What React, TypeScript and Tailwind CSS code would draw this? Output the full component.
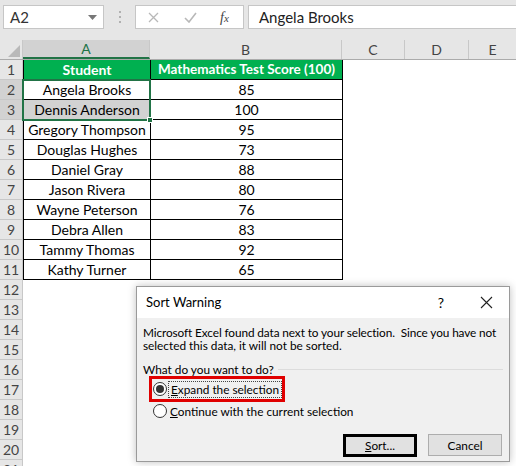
import React from "react";

const students: [string, string][] = [
  ["Angela Brooks", "85"],
  ["Dennis Anderson", "100"],
  ["Gregory Thompson", "95"],
  ["Douglas Hughes", "73"],
  ["Daniel Gray", "88"],
  ["Jason Rivera", "80"],
  ["Wayne Peterson", "76"],
  ["Debra Allen", "83"],
  ["Tammy Thomas", "92"],
  ["Kathy Turner", "65"],
];

const cellFont = { fontFamily: 'Lato, "Noto Sans", sans-serif' };
const uiFont = { fontFamily: 'Lato, "Noto Sans", sans-serif' };

function RowHead({ n, sel }: { n: number; sel?: boolean }) {
  return (
    <div
      className={`h-[20px] w-[23px] flex items-center justify-center border-b border-r border-[#c8c8c8] text-[14px] text-[#444] ${
        sel ? "bg-[#d2d2d2]" : "bg-[#e6e6e6]"
      }`}
    >
      {n}
    </div>
  );
}

export default function App() {
  return (
    <div className="relative w-[516px] h-[466px] overflow-hidden bg-white" style={cellFont}>
      {/* Formula bar */}
      <div className="h-[40px] bg-[#e6e6e6] flex items-start pt-[5px]">
        <div className="ml-[3px] w-[101px] h-[24px] bg-white border border-[#c6c6c6] flex items-center justify-between px-[6px]">
          <span className="text-[15px] text-[#333]">A2</span>
          <svg width="9" height="5" viewBox="0 0 9 5">
            <path d="M0 0 L9 0 L4.5 5 Z" fill="#777" />
          </svg>
        </div>
        <div className="ml-[15px] h-[24px] flex flex-col justify-center gap-[3px]">
          <div className="w-[2px] h-[2px] bg-[#b0b0b0]" />
          <div className="w-[2px] h-[2px] bg-[#b0b0b0]" />
          <div className="w-[2px] h-[2px] bg-[#b0b0b0]" />
        </div>
        <div className="ml-[14px] w-[109px] h-[24px] bg-white border border-[#c6c6c6] flex items-center">
          <svg className="ml-[12px]" width="11" height="11" viewBox="0 0 11 11">
            <path d="M1 1 L10 10 M10 1 L1 10" stroke="#b8b8b8" strokeWidth="1.3" />
          </svg>
          <svg className="ml-[25px]" width="13" height="11" viewBox="0 0 13 11">
            <path d="M1 6 L5 10 L12 1" stroke="#b8b8b8" strokeWidth="1.6" fill="none" />
          </svg>
          <span
            className="ml-[23px] text-[14px] italic text-[#444]"
            style={{ fontFamily: '"Liberation Serif", serif' }}
          >
            f<span className="text-[11px]">x</span>
          </span>
        </div>
        <div className="ml-[4px] flex-1 h-[24px] bg-white border-y border-l border-[#c6c6c6] flex items-center pl-[10px]">
          <span className="text-[15px] text-[#222]">Angela Brooks</span>
        </div>
      </div>

      {/* Column headers */}
      <div className="flex h-[20px] bg-[#e6e6e6] border-b border-[#ababab] text-[14px] text-[#444]">
        <div className="w-[23px] h-full border-r border-[#c8c8c8] relative">
          <svg className="absolute right-[2px] bottom-[2px]" width="12" height="12" viewBox="0 0 12 12">
            <path d="M12 0 L12 12 L0 12 Z" fill="#b9b9b9" />
          </svg>
        </div>
        <div className="w-[127px] h-full bg-[#d2d2d2] border-r border-[#c8c8c8] flex items-center justify-center text-[#217346] border-b-2 border-b-[#217346]">
          A
        </div>
        <div className="w-[192px] h-full border-r border-[#c8c8c8] flex items-center justify-center">B</div>
        <div className="w-[63px] h-full border-r border-[#c8c8c8] flex items-center justify-center">C</div>
        <div className="w-[64px] h-full border-r border-[#c8c8c8] flex items-center justify-center">D</div>
        <div className="flex-1 h-full flex items-center justify-center">E</div>
      </div>

      {/* Body */}
      <div className="flex">
        <div className="flex flex-col">
          {Array.from({ length: 21 }, (_, i) => (
            <RowHead key={i} n={i + 1} sel={i === 1 || i === 2} />
          ))}
        </div>
        <div className="relative">
          {/* table */}
          <div className="grid grid-cols-[127px_192px] border-l border-black text-[14px] text-black whitespace-nowrap">
            <div className="h-[20px] bg-[#00b050] text-white font-bold flex items-center justify-center border-r border-b border-black">
              Student
            </div>
            <div className="h-[20px] bg-[#00b050] text-white font-bold flex items-center justify-center border-r border-b border-black text-[13.5px]">
              Mathematics Test Score (100)
            </div>
            {students.map(([name, score], i) => (
              <React.Fragment key={name}>
                <div
                  className={`h-[20px] flex items-center justify-center border-r border-b border-black ${
                    i === 1 ? "bg-[#d2d2d2]" : "bg-white"
                  }`}
                >
                  {name}
                </div>
                <div className="h-[20px] flex items-center justify-center border-r border-b border-black">
                  {score}
                </div>
              </React.Fragment>
            ))}
          </div>
          {/* selection */}
          <div className="absolute left-[-1px] top-[19px] w-[129px] h-[42px] border-2 border-[#217346] pointer-events-none">
            <div className="absolute right-[-4px] bottom-[-4px] w-[6px] h-[6px] bg-[#217346] border border-white" />
          </div>
        </div>
      </div>

      {/* Dialog */}
      <div
        className="absolute left-[136px] top-[286px] w-[374px] h-[176px] border border-[#9a9a9a] bg-[#f0f0f0] shadow-[0_0_8px_rgba(0,0,0,0.25)] flex flex-col whitespace-nowrap"
        style={uiFont}
      >
        <div className="h-[31px] shrink-0 bg-white flex items-center pl-[9px] text-[13px] text-black">
          <span className="flex-1">Sort Warning</span>
          <span className="mr-[36px] text-[14px]">?</span>
          <svg className="mr-[16px]" width="13" height="13" viewBox="0 0 13 13">
            <path d="M1 1 L12 12 M12 1 L1 12" stroke="#222" strokeWidth="1.1" />
          </svg>
        </div>
        <div className="pl-[6px] pr-[6px] pt-[8px] text-[11.8px] leading-[13px] text-black">
          <p className="tracking-[-0.1px]">Microsoft Excel found data next to your selection.&nbsp; Since you have not</p>
          <p>selected this data, it will not be sorted.</p>
          <div className="flex items-center mt-[11px] h-[13px]">
            <span>What do you want to do?</span>
            <div className="flex-1 h-px bg-[#dcdcdc] ml-[4px]" />
          </div>
          <div className="mt-[0px] ml-[6px] w-[136px] h-[26px] border-[3px] border-[#e00000] flex items-center pl-[1px]">
            <div className="w-[14px] h-[14px] rounded-full border border-[#333] bg-white flex items-center justify-center shrink-0">
              <div className="w-[8px] h-[8px] rounded-full bg-[#333]" />
            </div>
            <span className="ml-[1px] border border-dotted border-[#444] px-[2px] leading-[15px]">
              <span className="underline">E</span>xpand the selection
            </span>
          </div>
          <div className="mt-[1px] ml-[10px] flex items-center h-[16px]">
            <div className="w-[14px] h-[14px] rounded-full border border-[#333] bg-white shrink-0" />
            <span className="ml-[3px]">
              <span className="underline">C</span>ontinue with the current selection
            </span>
          </div>
          <div className="flex justify-end gap-[11px] mt-[15px] pr-[1px]">
            <div className="w-[74px] h-[23px] border-[3px] border-black bg-[#e1e1e1] flex items-center justify-center">
              <span>
                <span className="underline">S</span>ort...
              </span>
            </div>
            <div className="w-[74px] h-[22px] border border-[#adadad] bg-[#e1e1e1] flex items-center justify-center">
              Cancel
            </div>
          </div>
        </div>
      </div>
    </div>
  );
}
